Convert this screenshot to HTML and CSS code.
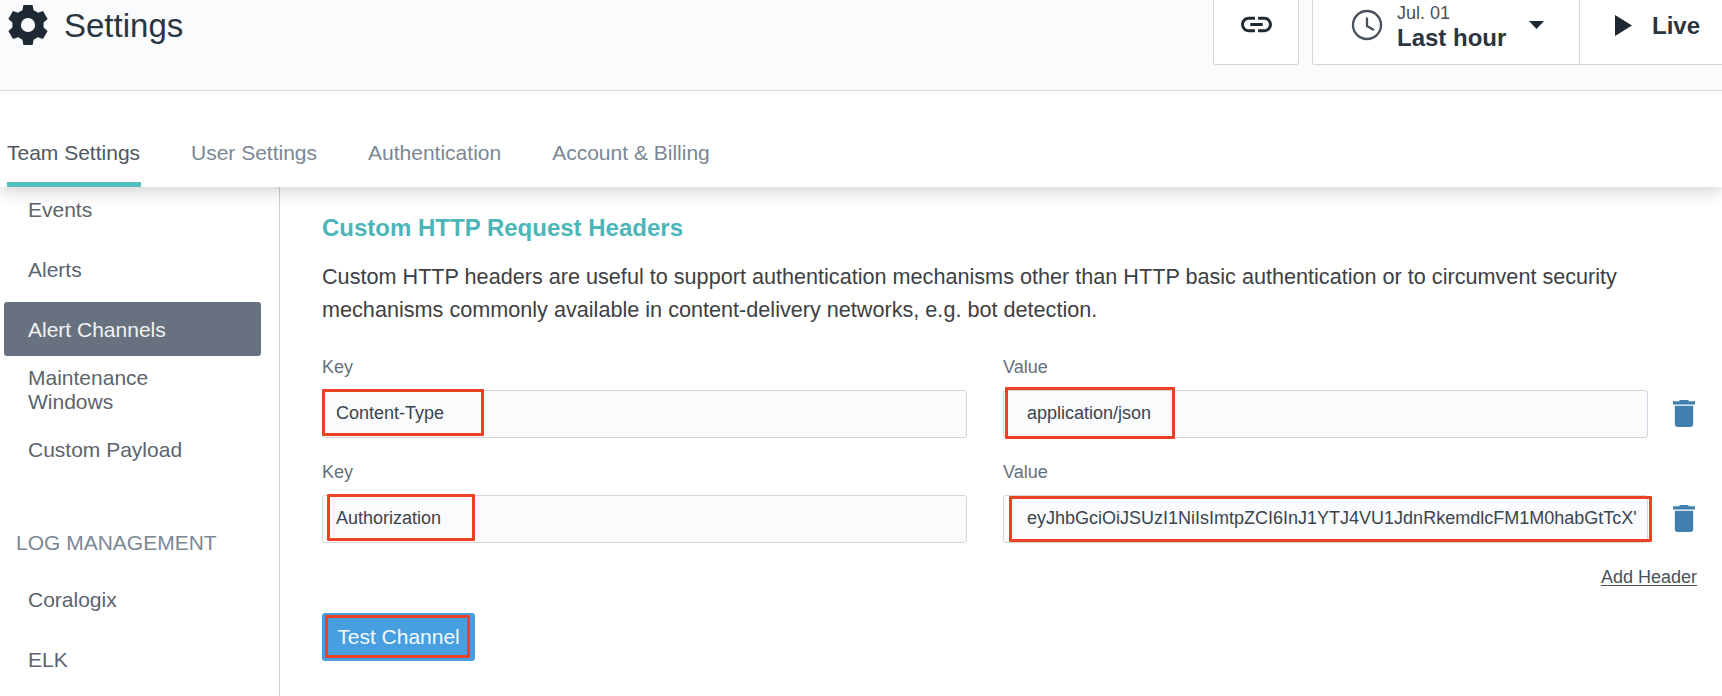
FILE: index.html
```html
<!DOCTYPE html>
<html lang="en">
<head>
<meta charset="utf-8">
<title>Settings</title>
<link rel="stylesheet" href="styles.css">
</head>
<body>
<header class="topbar">
  <div class="brand">
    <svg class="gear" viewBox="-24 -24 48 48">
      <circle class="gear-ring" r="11.400"/>
      <path id="teeth" d="M-4.600-20h9.200l1.400 7.500h-12zM-4.600 20h9.200l1.400-7.500h-12z"/>
      <use href="#teeth" transform="rotate(60)"/>
      <use href="#teeth" transform="rotate(-60)"/>
    </svg>
    <h1 class="title">Settings</h1>
  </div>
  <div class="controls">
    <button class="link-btn"><svg class="icon37" viewBox="0 0 24 24"><path d="M3.9 12c0-1.710 1.390-3.100 3.100-3.100h4V7H7c-2.760 0-5 2.240-5 5s2.240 5 5 5h4v-1.900H7c-1.710 0-3.100-1.390-3.100-3.100zM8 13h8v-2H8v2zm9-6h-4v1.900h4c1.710 0 3.100 1.390 3.100 3.100s-1.390 3.100-3.100 3.100h-4V17h4c2.760 0 5-2.240 5-5s-2.240-5-5-5z"/></svg></button>
    <div class="time">
      <button class="range">
        <svg class="clock" viewBox="0 0 32 32"><circle cx="16" cy="16" r="14"/><path d="M16 8.500v8.500l7 4"/></svg>
        <span class="range-text"><span class="date">Jul. 01</span><span class="period">Last hour</span></span>
        <svg class="caret" viewBox="0 0 15 8"><path d="M0 0h15L7.500 8z"/></svg>
      </button>
      <button class="live"><svg class="play" viewBox="0 0 17 21"><path d="M0 0l17 10.500L0 21z"/></svg>Live</button>
    </div>
  </div>
</header>
<nav class="tabs">
  <a class="tab active">Team Settings</a>
  <a class="tab">User Settings</a>
  <a class="tab">Authentication</a>
  <a class="tab">Account &amp; Billing</a>
</nav>
<div class="body">
  <aside class="sidebar">
    <a class="item">Events</a>
    <a class="item">Alerts</a>
    <a class="item selected">Alert Channels</a>
    <a class="item">Maintenance<br>Windows</a>
    <a class="item">Custom Payload</a>
    <h3 class="group">LOG MANAGEMENT</h3>
    <a class="item">Coralogix</a>
    <a class="item">ELK</a>
  </aside>
  <main class="content">
    <h2 class="heading">Custom HTTP Request Headers</h2>
    <p class="intro">Custom HTTP headers are useful to support authentication mechanisms other than HTTP basic authentication or to circumvent security<br>mechanisms commonly available in content-delivery networks, e.g. bot detection.</p>
    <div class="row">
      <div class="field"><span class="label">Key</span><div class="input">Content-Type<i class="mark mark-type"></i></div></div>
      <div class="field value"><span class="label">Value</span><div class="input">application/json<i class="mark mark-json"></i></div></div>
      <svg class="trash" viewBox="0 0 22 27"><path d="M6.500 0h9v1.300H22v3.200H0V1.300h6.500zM1.800 5.800h18.400V24a3 3 0 0 1-3 3H4.800a3 3 0 0 1-3-3z"/></svg>
    </div>
    <div class="row">
      <div class="field"><span class="label">Key</span><div class="input">Authorization<i class="mark mark-auth"></i></div></div>
      <div class="field value"><span class="label">Value</span><div class="input">eyJhbGciOiJSUzI1NiIsImtpZCI6InJ1YTJ4VU1JdnRkemdlcFM1M0habGtTcX'<i class="mark mark-token"></i></div></div>
      <svg class="trash" viewBox="0 0 22 27"><path d="M6.500 0h9v1.300H22v3.200H0V1.300h6.500zM1.800 5.800h18.400V24a3 3 0 0 1-3 3H4.800a3 3 0 0 1-3-3z"/></svg>
    </div>
    <a class="add">Add Header</a>
    <button class="test">Test Channel<i class="mark mark-test"></i></button>
  </main>
</div>
</body>
</html>
```

FILE: styles.css
```css
* { box-sizing: border-box; }
body {
  margin: 0;
  width: 1722px;
  height: 696px;
  overflow: hidden;
  display: flex;
  flex-direction: column;
  background: #fff;
  font-family: "Liberation Sans", Arial, sans-serif;
  font-size: 21px;
  color: #5c646e;
}
h1, h2, h3, p { margin: 0; font-weight: 400; }
button { border: 0; margin: 0; padding: 0; background: none; font: inherit; color: inherit; }
svg { display: block; flex: none; }

.topbar {
  position: relative;
  z-index: 2;
  flex: none;
  height: 91px;
  display: flex;
  justify-content: space-between;
  align-items: flex-start;
  background: #fafbfd;
  border-bottom: 1px solid #dcdfe2;
  color: #1f2933;
}
.brand { display: flex; align-items: center; gap: 12px; height: 50px; padding-left: 4px; }
.gear { width: 48px; height: 48px; fill: #1f2933; }
.gear-ring { fill: none; stroke: #1f2933; stroke-width: 8.600; }
.title { padding-top: 2px; font-size: 33px; line-height: 50px; color: #2b3540; }
.controls { display: flex; gap: 13px; height: 65px; }
.link-btn {
  width: 86px;
  padding-left: 24px;
  padding-top: 6px;
  display: flex;
  align-items: flex-start;
  background: #fff;
  border: 1px solid #d4d7da;
  border-top: 0;
  border-radius: 0 0 3px 3px;
}
.icon37 { width: 37px; height: 37px; fill: #1f2933; }
.time {
  width: 410px;
  display: flex;
  background: #fff;
  border-left: 1px solid #d4d7da;
  border-bottom: 1px solid #d4d7da;
  border-radius: 0 0 0 3px;
}
.range {
  width: 267px;
  display: flex;
  align-items: flex-start;
  padding-left: 38px;
  border-right: 1px solid #d4d7da;
  text-align: left;
}
.clock { width: 32px; height: 32px; margin-top: 9px; fill: none; stroke: #48505a; stroke-width: 2.300; }
.range-text { display: flex; flex-direction: column; width: 133px; margin-left: 14px; padding-top: 1px; }
.date { font-size: 18px; line-height: 24px; color: #48505a; }
.period { font-size: 24px; line-height: 25px; font-weight: 700; color: #2b3540; }
.caret { width: 15px; height: 8px; margin-top: 21px; margin-left: -1px; fill: #1f2933; }
.live { display: flex; align-items: center; gap: 20px; height: 51px; padding-left: 35px; font-size: 24px; font-weight: 700; color: #2b3540; }
.play { width: 17px; height: 21px; fill: #1f2933; }

.tabs {
  flex: none;
  height: 96px;
  display: flex;
  gap: 51px;
  padding-left: 7px;
  background: #fff;
  box-shadow: 0 2px 18px rgba(0, 0, 0, .22);
  position: relative;
  z-index: 1;
}
.tab { height: 96px; padding-top: 50px; line-height: 24px; color: #7b8794; white-space: nowrap; }
.tab.active { width: 134px; margin-right: -1px; color: #52565e; border-bottom: 5px solid #54bfc1; }

.body { flex: 1; min-height: 0; display: flex; overflow: hidden; }
.sidebar {
  width: 280px;
  flex: none;
  margin-top: -5px;
  padding: 0 18px 0 4px;
  display: flex;
  flex-direction: column;
  gap: 6px;
  border-right: 1px solid #d0d3d5;
}
.item { flex: none; height: 54px; padding: 2px 0 0 24px; display: flex; align-items: center; line-height: 24px; border-radius: 3px; }
.item.selected { background: #67717f; color: #f1f3f5; }
.group { flex: none; height: 24px; margin: 49px 0 11px; padding-left: 12px; font-size: 21px; line-height: 24px; color: #7b8794; white-space: nowrap; }

.content { flex: 1; padding: 27px 25px 0 42px; display: flex; flex-direction: column; }
.heading { font-size: 24px; line-height: 28px; font-weight: 700; color: #4cb5b8; }
.intro { margin-top: 18px; font-size: 21.63px; line-height: 33px; color: #3e4042; white-space: nowrap; }
.row { display: flex; align-items: flex-end; height: 78px; margin-top: 34px; }
.row + .row { margin-top: 27px; }
.field { width: 645px; display: flex; flex-direction: column; gap: 12px; font-size: 18px; }
.field.value { margin-left: 36px; }
.label { line-height: 21px; color: #66707a; }
.input {
  position: relative;
  height: 48px;
  padding-left: 13px;
  line-height: 44px;
  background: #fafbfd;
  border: 1px solid #d2d6da;
  border-radius: 3px;
  color: #3a444f;
  white-space: nowrap;
}
.value .input { padding-left: 23px; }
.trash { width: 22px; height: 27px; margin: 0 0 11px 25px; fill: #4180ae; }
.add { align-self: flex-end; margin-top: 23px; font-size: 18px; line-height: 22px; color: #48505a; text-decoration: underline; text-underline-offset: 2px; }
.test {
  position: relative;
  width: 153px;
  height: 48px;
  padding-bottom: 1px;
  margin-top: 25px;
  background: #489fe0;
  border-radius: 3px;
  color: #f3f9fd;
}

/* Highlight frames drawn over the form controls */
.mark { position: absolute; border: 3px solid #ee4023; border-radius: 1px; }
.mark-type { left: -1px; top: -2px; width: 162px; height: 47px; }
.mark-auth { left: 4px; top: -2px; width: 148px; height: 47px; }
.mark-json { left: 1px; top: -4px; width: 170px; height: 52px; }
.mark-token { left: 5px; top: 0; width: 643px; height: 46px; }
.mark-test { left: 3px; top: 2px; width: 145px; height: 43px; }
```
